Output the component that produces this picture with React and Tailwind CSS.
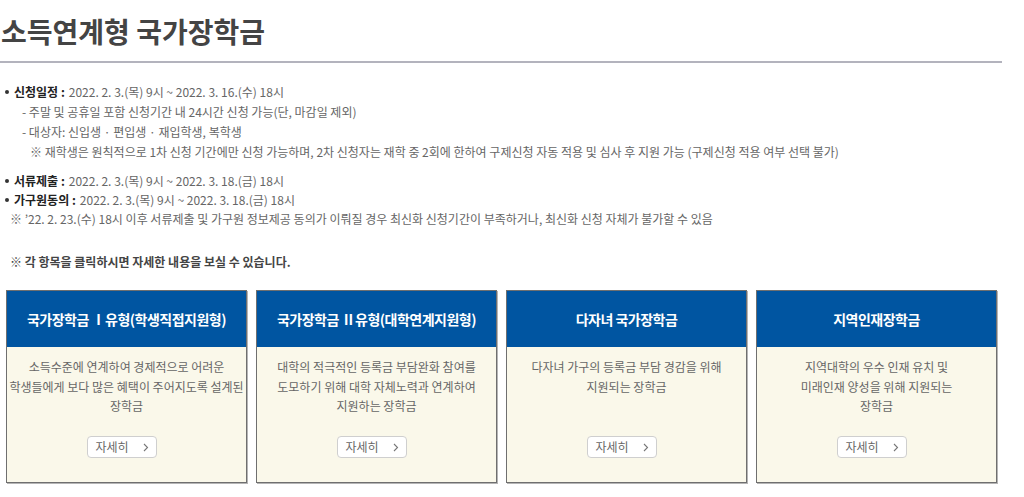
import React from "react"

const font = { fontFamily: '"Noto Sans CJK KR", "Noto Sans", sans-serif' }

const cards = [
  {
    title: "국가장학금 Ⅰ유형(학생직접지원형)",
    lines: ["소득수준에 연계하여 경제적으로 어려운", "학생들에게 보다 많은 혜택이 주어지도록 설계된", "장학금"],
  },
  {
    title: "국가장학금 Ⅱ유형(대학연계지원형)",
    lines: ["대학의 적극적인 등록금 부담완화 참여를", "도모하기 위해 대학 자체노력과 연계하여", "지원하는 장학금"],
  },
  {
    title: "다자녀 국가장학금",
    lines: ["다자녀 가구의 등록금 부담 경감을 위해", "지원되는 장학금"],
  },
  {
    title: "지역인재장학금",
    lines: ["지역대학의 우수 인재 유치 및", "미래인재 양성을 위해 지원되는", "장학금"],
  },
]

const Bullet = ({ label, children }) => (
  <div className="flex items-center">
    <span className="w-[4px] h-[4px] rounded-full bg-[#333] ml-[5px] mr-[5px]"></span>
    <span className="font-bold text-[#222]">{label} :</span>
    <span className="ml-[4px]">{children}</span>
  </div>
)

const Card = ({ title, lines }) => (
  <div className="h-[193px] flex flex-col border border-[#6f6f6f] shadow-[1px_1px_0_#b5b5b5] bg-[#faf8ea]">
    <div className="h-[56px] bg-[#0055a1] flex items-center justify-center text-white font-bold text-[14px] tracking-[-0.5px]">
      {title}
    </div>
    <div className="pt-[10px] text-center text-[12px] leading-[19.5px] text-[#666]">
      {lines.map((l, i) => (
        <div key={i}>{l}</div>
      ))}
    </div>
    <div className="mt-auto pb-[24px] flex justify-center pr-[9px]">
      <button className="w-[70px] h-[22px] bg-white border border-[#cfcfcf] rounded-[4px] flex items-center justify-center gap-[14px] text-[12px] text-[#666]">
        <span>자세히</span>
        <svg width="6" height="9" viewBox="0 0 6 9" fill="none">
          <path d="M1 1l3.5 3.5L1 8" stroke="#777" strokeWidth="1.1" />
        </svg>
      </button>
    </div>
  </div>
)

const App = () => {
  return (
    <div className="w-[1024px] h-[497px] bg-white overflow-hidden" style={font}>
      <div className="w-[1002px]">
        <h1 className="pt-[12px] pl-[1px] text-[28px] leading-[38px] font-bold text-[#444]">
          소득연계형 국가장학금
        </h1>
        <div className="mt-[11px] h-[2px] bg-[#b3b3bd]"></div>

        <div className="mt-[19px] text-[12px] leading-[20px] text-[#666]">
          <Bullet label="신청일정">2022. 2. 3.(목) 9시 ~ 2022. 3. 16.(수) 18시</Bullet>
          <div className="pl-[22px]">- 주말 및 공휴일 포함 신청기간 내 24시간 신청 가능(단, 마감일 제외)</div>
          <div className="pl-[22px]">- 대상자: 신입생 · 편입생 · 재입학생, 복학생</div>
          <div className="pl-[30px]">
            ※ 재학생은 원칙적으로 1차 신청 기간에만 신청 가능하며, 2차 신청자는 재학 중 2회에 한하여 구제신청 자동 적용 및 심사 후 지원 가능 (구제신청 적용 여부 선택 불가)
          </div>

          <div className="mt-[9px] leading-[19px]">
            <Bullet label="서류제출">2022. 2. 3.(목) 9시 ~ 2022. 3. 18.(금) 18시</Bullet>
            <Bullet label="가구원동의">2022. 2. 3.(목) 9시 ~ 2022. 3. 18.(금) 18시</Bullet>
            <div className="pl-[10px]">
              ※ ’22. 2. 23.(수) 18시 이후 서류제출 및 가구원 정보제공 동의가 이뤄질 경우 최신화 신청기간이 부족하거나, 최신화 신청 자체가 불가할 수 있음
            </div>
          </div>

          <div className="mt-[24px] pl-[10px] font-bold text-[#444]">※ 각 항목을 클릭하시면 자세한 내용을 보실 수 있습니다.</div>
        </div>

        <div className="mt-[18px] ml-[6px] grid grid-cols-[repeat(4,241px)] gap-[9px]">
          {cards.map((c, i) => (
            <Card key={i} title={c.title} lines={c.lines} />
          ))}
        </div>
      </div>
    </div>
  )
}

export default App
